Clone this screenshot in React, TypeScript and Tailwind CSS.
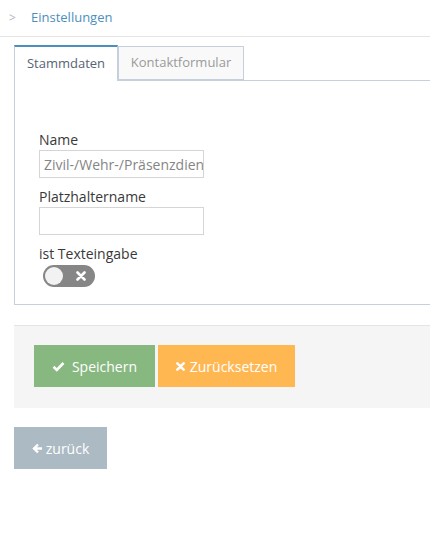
import { useState } from 'react'

export default function App() {
  const [on, setOn] = useState(false)
  return (
    <div className="w-[430px] h-[544px] overflow-hidden bg-white text-[13px] text-[#393939] font-['Open_Sans',sans-serif]">
      <div className="h-[37px] border-b border-[#e5e5e5] flex items-center pl-[9px]">
        <span className="text-[#b2b6bf] text-[12px] w-[22px]">&gt;</span>
        <span className="text-[#4c8fbd] text-[13px]">Einstellungen</span>
      </div>

      <div className="pl-[14px] w-[450px]">
        <div className="flex mt-[8px] h-[35px] relative z-10">
          <div className="w-[104px] border-t-2 border-t-[#4c8fbd] border-x border-[#c5d0dc] bg-white flex items-center justify-center text-[#576373] h-[36px]">
            Stammdaten
          </div>
          <div className="w-[126px] mt-[1px] border border-[#c5d0dc] bg-[#f9f9f9] flex items-center justify-center text-[#999] h-[34px]">
            Kontaktformular
          </div>
        </div>

        <div className="border border-[#c5d0dc] h-[225px] pl-[24px] pt-[50px] text-[14px]">
          <label className="block leading-[18px]">Name</label>
          <div className="mt-[1px] w-[165px] h-[28px] border border-[#d5d5d5] flex items-center px-[4px] overflow-hidden whitespace-nowrap text-[#858585]">
            Zivil-/Wehr-/Präsenzdienst
          </div>
          <label className="block leading-[18px] mt-[10px]">Platzhaltername</label>
          <div className="mt-[1px] w-[165px] h-[28px] border border-[#d5d5d5]" />
          <label className="block leading-[18px] mt-[10px]">ist Texteingabe</label>
          <button
            onClick={() => setOn(!on)}
            className="mt-[2px] ml-[4px] w-[52px] h-[22px] rounded-full bg-[#868686] flex items-center px-[2px] relative"
          >
            <span className="w-[18px] h-[18px] rounded-full bg-[#f2f2f2]" />
            <svg className="absolute right-[9px] top-[6px]" width="10" height="10" viewBox="0 0 10 10">
              <path d="M1.5 1.5 L8.5 8.5 M8.5 1.5 L1.5 8.5" stroke="white" strokeWidth="2.6" strokeLinecap="round" />
            </svg>
          </button>
        </div>

        <div className="mt-[20px] border-t border-[#e5e5e5] bg-[#f5f5f5] h-[83px] pl-[20px] pt-[19px] flex gap-[3px] items-start">
          <button className="w-[121px] h-[42px] bg-[#87b87f] text-white text-[14px] flex items-center justify-center gap-[7px]">
            <svg width="13" height="11" viewBox="0 0 13 11">
              <path d="M1.5 5.8 L4.8 9 L11.5 2" fill="none" stroke="white" strokeWidth="2.6" />
            </svg>
            Speichern
          </button>
          <button className="w-[137px] h-[42px] bg-[#ffb752] text-white text-[14px] flex items-center justify-center gap-[5px]">
            <svg width="9" height="9" viewBox="0 0 10 10">
              <path d="M1.5 1.5 L8.5 8.5 M8.5 1.5 L1.5 8.5" stroke="white" strokeWidth="2.8" strokeLinecap="round" />
            </svg>
            Zurücksetzen
          </button>
        </div>

        <button className="mt-[19px] w-[93px] h-[42px] bg-[#abbac3] text-white text-[14px] flex items-center justify-center gap-[3px]">
          <svg width="11" height="11" viewBox="0 0 11 11">
            <path d="M10 5.5 H2.5 M6 1.5 L2 5.5 L6 9.5" fill="none" stroke="white" strokeWidth="2.4" />
          </svg>
          zurück
        </button>
      </div>
    </div>
  )
}
